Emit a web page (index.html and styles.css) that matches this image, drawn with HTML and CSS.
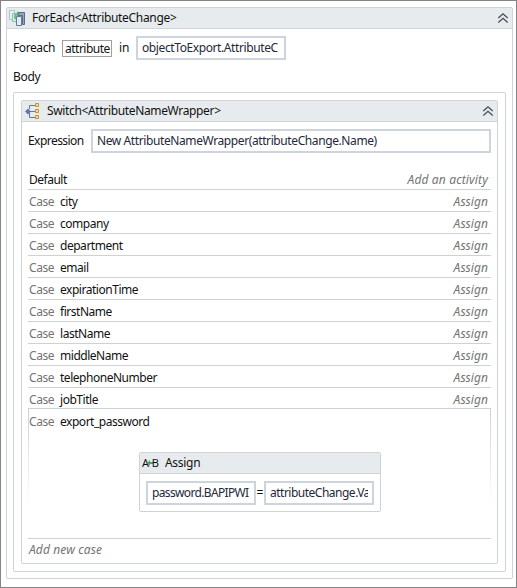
FILE: index.html
```
<!DOCTYPE html>
<html lang="en">
<head>
<meta charset="utf-8">
<title>ForEach activity</title>
<link rel="stylesheet" href="styles.css">
</head>
<body>
<main class="activity foreach">
  <header class="head">
    <svg class="icon" width="18" height="18" viewBox="0 0 18 18">
      <path d="M.5 1.500h5v9h-5z" fill="#e6f3f5" stroke="#a3c5cf"/>
      <path d="M3.500 4.500h6v8h-6z" fill="#d5ecd8" stroke="#8fbcae"/>
      <path d="M5 9c0-4 1-5 3-5V2l4 3-4 3V6.500C7 6.500 7 8 7 11z" fill="#6bb887"/>
      <path d="M9.500 3.500h6v12h-2v-9h-4z" fill="#96a4bd" stroke="#5b6c87"/>
      <path d="M7.500 7.500h5v9h-5z" fill="#e2eaf2" stroke="#667997"/>
    </svg>
    <span class="title t-foreach">ForEach&lt;AttributeChange&gt;</span>
    <svg class="chevron" width="12" height="12" viewBox="0 0 12 12"><path d="M1.300 6 6 1.800 10.700 6M1.300 10.500 6 6.300l4.700 4.200"/></svg>
  </header>
  <div class="loop">
    <span class="loop-label">Foreach</span>
    <span class="variable"><span class="t-variable">attribute</span></span>
    <span class="loop-in">in</span>
    <span class="field source"><span class="t-source">objectToExport.AttributeC</span></span>
  </div>
  <div class="body-label">Body</div>
  <section class="body-box">
    <div class="activity switch">
      <header class="head">
        <svg class="icon" width="18" height="18" viewBox="0 0 18 18">
          <path d="M4 9.500h7M5.500 7V3.500H11M5.500 11v4.500H11" fill="none" stroke="#68788f"/>
          <path d="M1 9.500 4 6.500 7 9.500 4 12.500z" fill="#5878b0"/>
          <path d="M11.500 1.500h3v3h-3zM11.500 7.500h3v3h-3zM11.500 13.500h3v3h-3z" fill="#f7dd94" stroke="#bd933f"/>
        </svg>
        <span class="title t-switch">Switch&lt;AttributeNameWrapper&gt;</span>
        <svg class="chevron" width="12" height="12" viewBox="0 0 12 12"><path d="M1.300 6 6 1.800 10.700 6M1.300 10.500 6 6.300l4.700 4.200"/></svg>
      </header>
      <div class="expression">
        <span class="t-expression">Expression</span>
        <span class="field"><span class="t-value">New AttributeNameWrapper(attributeChange.Name)</span></span>
      </div>
      <div class="cases">
        <div class="case"><span class="t-default">Default</span><em class="t-add">Add an activity</em></div>
        <div class="case"><span class="key">Case</span><span>city</span><em>Assign</em></div>
        <div class="case"><span class="key">Case</span><span>company</span><em>Assign</em></div>
        <div class="case"><span class="key">Case</span><span>department</span><em>Assign</em></div>
        <div class="case"><span class="key">Case</span><span>email</span><em>Assign</em></div>
        <div class="case"><span class="key">Case</span><span>expirationTime</span><em>Assign</em></div>
        <div class="case"><span class="key">Case</span><span>firstName</span><em>Assign</em></div>
        <div class="case"><span class="key">Case</span><span>lastName</span><em>Assign</em></div>
        <div class="case"><span class="key">Case</span><span>middleName</span><em>Assign</em></div>
        <div class="case"><span class="key">Case</span><span>telephoneNumber</span><em>Assign</em></div>
        <div class="case last"><span class="key">Case</span><span>jobTitle</span><em>Assign</em></div>
        <div class="open-case">
          <div class="case open-head"><span class="key">Case</span><span>export_password</span></div>
          <div class="activity assign">
            <header class="head">
              <span class="ab">A<svg width="6" height="8" viewBox="0 0 6 8"><path d="M0 4 3 1v2h3v2H3v2z" fill="#4da568"/></svg>B</span>
              <span class="title">Assign</span>
            </header>
            <div class="assignment">
              <span class="field"><span class="t-to">password.BAPIPWI</span></span>
              <span class="equals">=</span>
              <span class="field"><span class="t-from">attributeChange.Va</span></span>
            </div>
          </div>
        </div>
        <div class="new-case"><em class="t-new">Add new case</em></div>
      </div>
    </div>
  </section>
</main>
</body>
</html>
```
FILE: styles.css
```
* { box-sizing: border-box; }
body {
  margin: 0;
  width: 517px;
  height: 588px;
  padding: 6px 3px 8px 5px;
  border: 1px solid #858585;
  background: #fff;
  color: #111;
  font: 12px/18px "Noto Sans", "Open Sans", sans-serif;
  letter-spacing: -0.2px;
  white-space: nowrap;
  overflow: hidden;
}
.activity { border: 1px solid #ced2d9; border-radius: 2px; background: #fff; }
.foreach { width: 507px; height: 572px; }
.head {
  display: flex;
  align-items: center;
  height: 21px;
  padding: 0 8px 0 2px;
  background: #e7ebee;
  border-bottom: 1px solid #ced2d9;
}
.icon { flex: none; }
.title { margin-left: 5px; }
.t-foreach { letter-spacing: -0.33px; }
.t-switch { letter-spacing: -0.35px; }
.chevron { margin-left: auto; fill: none; stroke: #434c59; stroke-width: 1.3; }
.foreach > .head .chevron { margin-right: -5px; }
.loop { display: flex; height: 24px; margin: 7px 0 0 6px; line-height: 24px; }
.loop-label { width: 49px; letter-spacing: -0.4px; }
.variable {
  width: 50px;
  height: 17px;
  margin-top: 4px;
  padding-left: 2px;
  border: 1px solid #a0a0a0;
  line-height: 16px;
  letter-spacing: -0.5px;
}
.loop-in { width: 24px; padding-left: 7px; }
.field {
  height: 24px;
  padding: 0 4px;
  border: 2px solid #ced4dd;
  color: #25283a;
  line-height: 20px;
  letter-spacing: -0.4px;
  overflow: hidden;
}
.field > span { display: block; overflow: hidden; }
.source { width: 150px; }
.t-source { letter-spacing: -0.4px; }
.body-label { height: 32px; padding: 8px 0 0 6px; letter-spacing: -0.3px; }
.body-box {
  width: 493px;
  height: 480px;
  margin-left: 6px;
  padding: 7px;
  border: 1px solid #ced2d9;
  border-radius: 2px;
}
.switch { width: 477px; height: 464px; }
.switch > .head .chevron { margin-right: -5px; }
.expression { display: flex; margin: 7px 0 0 6px; line-height: 23px; }
.expression > span:first-child { width: 63px; letter-spacing: -0.55px; }
.expression .field { width: 400px; }
.cases { width: 463px; margin: 15px 0 0 6px; letter-spacing: -0.47px; }
.case {
  display: flex;
  height: 22px;
  padding: 3px 3px 0 1px;
  border-bottom: 1px solid #ced1d5;
}
.case.last { height: 20px; border: 0; }
em { letter-spacing: 0.05px; }
.case em { margin-left: auto; }
.case .t-add { letter-spacing: 0.15px; }
.t-new { letter-spacing: 0.13px; }
.t-default { letter-spacing: -0.5px; }
em, .key { color: #747474; }
.key { width: 31px; letter-spacing: -0.4px; }
.open-case {
  height: 131px;
  background:
    linear-gradient(#ced1d5, #fff) 0 0 / 1px 98px no-repeat,
    linear-gradient(#ced1d5, #fff) 100% 0 / 1px 98px no-repeat;
  border-top: 1px solid #ced1d5;
  border-bottom: 1px solid #ced1d5;
}
.open-head { border: 0; padding-top: 4px; }
.assign { width: 242px; height: 60px; margin: 21px 0 0 111px; }
.ab { display: flex; align-items: center; width: 18px; font-size: 11px; letter-spacing: -0.4px; }
.ab svg { flex: none; margin: 0 -1.5px; }
.assign .title { letter-spacing: -0.3px; }
.assignment { display: flex; padding: 7px 6px; line-height: 23px; }
.assignment .field { width: 110px; }
.assignment .t-to { letter-spacing: -0.65px; }
.assignment .t-from { letter-spacing: -0.5px; }
.equals { width: 8px; text-align: center; letter-spacing: 0; }
.new-case { padding: 2px 0 0 1px; }
```
